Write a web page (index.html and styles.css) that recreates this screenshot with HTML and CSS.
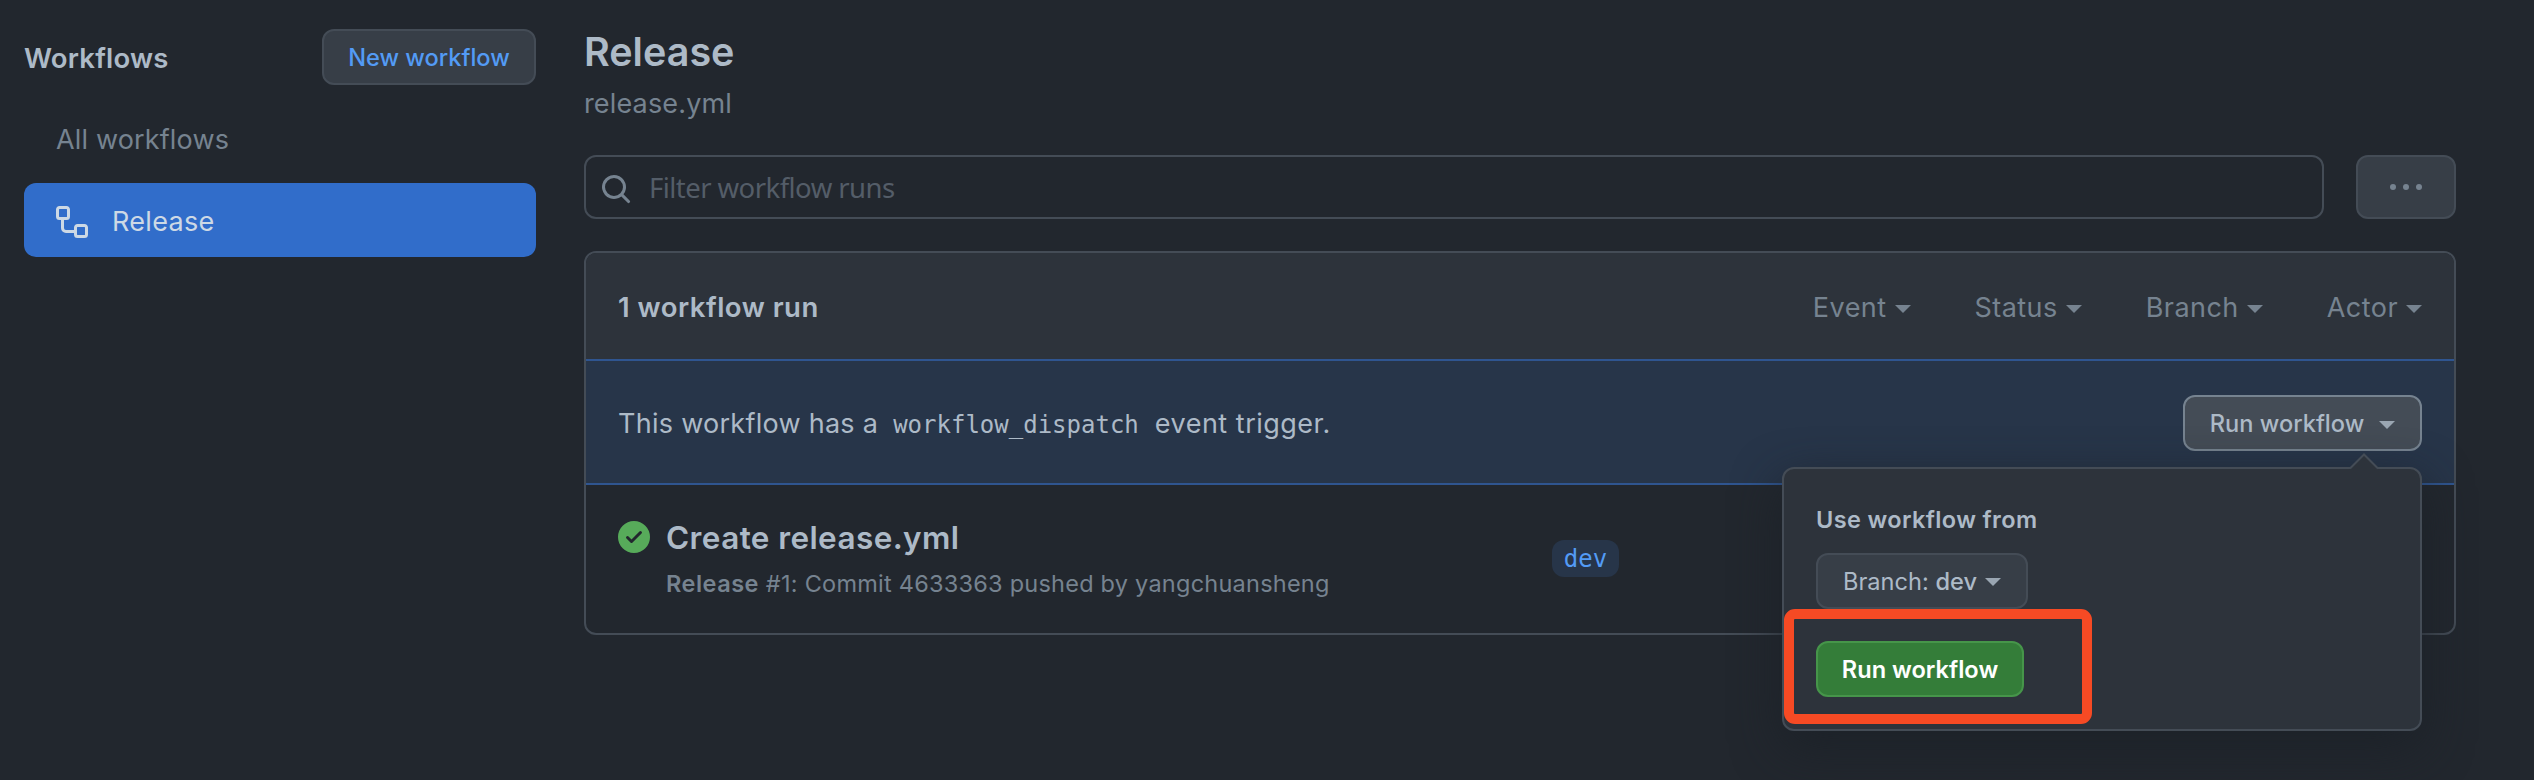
FILE: index.html
```html
<!DOCTYPE html>
<html lang="en">
<head>
<meta charset="utf-8">
<title>Workflow runs</title>
<link rel="stylesheet" href="styles.css">
</head>
<body>
<div class="page">
  <aside class="sidebar">
    <div class="sidebar-head">
      <h2 class="sidebar-title">Workflows</h2>
      <button class="btn btn-new">New workflow</button>
    </div>
    <nav class="nav">
      <a class="nav-item">All workflows</a>
      <a class="nav-item nav-active">
        <svg class="nav-icon" viewBox="0 0 16 16" width="32" height="32"><path fill-rule="evenodd" d="M0 1.75C0 .784.784 0 1.75 0h3.5C6.216 0 7 .784 7 1.75v3.5A1.75 1.75 0 015.25 7H4v4a1 1 0 001 1h4v-1.25C9 9.784 9.784 9 10.75 9h3.5c.966 0 1.75.784 1.75 1.75v3.5A1.75 1.75 0 0114.25 16h-3.5A1.75 1.75 0 019 14.25v-.75H5A2.5 2.5 0 012.5 11V7h-.75A1.75 1.75 0 010 5.25v-3.5zm1.75-.25a.25.25 0 00-.25.25v3.5c0 .138.112.25.25.25h3.5a.25.25 0 00.25-.25v-3.5a.25.25 0 00-.25-.25h-3.5zm9 9a.25.25 0 00-.25.25v3.5c0 .138.112.25.25.25h3.5a.25.25 0 00.25-.25v-3.5a.25.25 0 00-.25-.25h-3.5z"/></svg>
        <span>Release</span>
      </a>
    </nav>
  </aside>
  <main class="main">
    <h1 class="title">Release</h1>
    <div class="file">release.yml</div>
    <div class="filter-row">
      <div class="search">
        <svg class="search-icon" viewBox="0 0 16 16" width="32" height="32"><path fill-rule="evenodd" d="M11.5 7a4.499 4.499 0 11-8.998 0A4.499 4.499 0 0111.5 7zm-.82 4.74a6 6 0 111.06-1.06l3.04 3.04a.75.75 0 11-1.06 1.06l-3.04-3.04z"/></svg>
        <span class="placeholder">Filter workflow runs</span>
      </div>
      <button class="btn btn-more" aria-label="More"><i class="dot"></i><i class="dot"></i><i class="dot"></i></button>
    </div>
    <section class="box">
      <header class="box-head">
        <strong class="count">1 workflow run</strong>
        <div class="filters">
          <span class="filter">Event<i class="caret"></i></span>
          <span class="filter">Status<i class="caret"></i></span>
          <span class="filter">Branch<i class="caret"></i></span>
          <span class="filter">Actor<i class="caret"></i></span>
        </div>
      </header>
      <div class="dispatch">
        <p class="dispatch-text"><span>This workflow has a</span><code class="code">workflow_dispatch</code><span class="dispatch-tail">event trigger.</span></p>
        <div class="menu">
          <button class="btn btn-run">Run workflow<i class="caret"></i></button>
          <div class="popover">
            <svg class="pointer" width="30" height="17" viewBox="0 0 30 17"><path class="pointer-fill" d="M0 17L15 1L30 17Z"/><path class="pointer-line" d="M1 15.5L15 1.5L29 15.5"/></svg>
            <div class="popover-label">Use workflow from</div>
            <button class="btn btn-branch"><span>Branch: <b>dev</b></span><i class="caret"></i></button>
            <button class="btn btn-primary">Run workflow</button>
            <div class="highlight"></div>
          </div>
        </div>
      </div>
      <div class="run">
        <svg class="check" viewBox="0 0 16 16" width="32" height="32"><path fill-rule="evenodd" d="M8 16A8 8 0 108 0a8 8 0 000 16zm3.78-9.72a.75.75 0 00-1.06-1.06L6.75 9.19 5.28 7.72a.75.75 0 00-1.06 1.06l2 2a.75.75 0 001.06 0l4.5-4.5z"/></svg>
        <div class="run-text">
          <div class="run-title">Create release.yml</div>
          <div class="run-meta"><b>Release</b> #1: Commit 4633363 pushed by yangchuansheng</div>
        </div>
        <span class="branch">dev</span>
      </div>
    </section>
  </main>
</div>
</body>
</html>
```

FILE: styles.css
```css
* { box-sizing: border-box; }
body {
  margin: 0;
  background: #22272e;
  color: #adbac7;
  font-family: Inter, "Liberation Sans", sans-serif;
  font-size: 27px;
  line-height: 42px;
}
h1, h2, p { margin: 0; font-weight: 600; }
.page { display: flex; gap: 48px; height: 780px; padding: 0 78px 0 24px; overflow: hidden; }
.sidebar { width: 512px; flex: none; padding-top: 29px; }
.sidebar-head { display: flex; justify-content: space-between; align-items: center; height: 56px; }
.sidebar-title { font-size: 27.5px; letter-spacing: .2px; padding-top: 1px; }
.btn {
  display: flex; align-items: center; justify-content: center;
  height: 56px; padding: 1px 25px 0;
  border: 2px solid #444c56; border-radius: 12px;
  background: #373e47; color: #adbac7;
  font-family: inherit; font-size: 23.6px; font-weight: 500; line-height: 40px;
  white-space: nowrap;
}
.btn-new { width: 214px; color: #539bf5; }
.nav { display: flex; flex-direction: column; gap: 8px; padding-top: 16px; }
.nav-item { display: flex; align-items: center; height: 74px; padding: 3px 32px 0; border-radius: 12px; color: #768390; letter-spacing: .15px; }
.nav-active { background: #316dca; color: #cdd9e5; gap: 24px; letter-spacing: .3px; }
.nav-icon { fill: #cdd9e5; }
.main { flex: 1; min-width: 0; padding-top: 26px; }
.title { font-size: 39.5px; line-height: 52px; }
.file { color: #768390; line-height: 42px; padding-top: 5px; height: 77px; letter-spacing: .15px; }
.filter-row { display: flex; gap: 32px; }
.search { flex: 1; display: flex; align-items: center; height: 64px; border: 2px solid #444c56; border-radius: 12px; padding-left: 14px; }
.search-icon { fill: #768390; margin-top: 4px; }
.placeholder { font-family: "Noto Sans", sans-serif; font-size: 27.5px; letter-spacing: -.55px; color: #545d68; padding: 1px 0 0 17px; }
.btn-more { width: 100px; height: 64px; gap: 7px; padding-top: 0; }
.dot { width: 6px; height: 6px; border-radius: 50%; background: #768390; }
.box { margin-top: 32px; height: 384px; border: 2px solid #444c56; border-radius: 12px; }
.box-head { display: flex; justify-content: space-between; align-items: center; height: 106px; padding: 3px 32px 0; background: #2d333b; border-radius: 10px 10px 0 0; }
.count { font-size: 27.5px; font-weight: 600; letter-spacing: .5px; padding-bottom: 2px; }
.filters { display: flex; gap: 64px; color: #768390; letter-spacing: .45px; }
.filter { display: flex; align-items: center; gap: 8px; }
.caret { flex: none; width: 0; height: 0; border: 8px solid transparent; border-top-color: currentColor; border-bottom: 0; }
.filter .caret { margin-top: 3px; }
.dispatch { display: flex; justify-content: space-between; align-items: center; height: 126px; padding: 2px 32px 0; border: solid #2f5590; border-width: 2px 0; background: #273549; }
.dispatch-text { display: flex; align-items: center; padding-top: 1px; font-weight: 400; letter-spacing: .27px; }
.dispatch-tail { letter-spacing: .5px; }
.code { font-family: "DejaVu Sans Mono", monospace; font-size: 24px; letter-spacing: 0; padding: 2px 16px 0 15px; }
.menu { position: relative; }
.btn-run { width: 239px; gap: 15px; background: #444c56; border-color: #768390; }
.btn-run .caret { margin-top: 3px; }
.btn .caret { color: #9aa6b2; border-top-color: currentColor; }
.popover {
  position: absolute; right: 0; top: 72px; z-index: 2;
  display: flex; flex-direction: column; align-items: flex-start;
  width: 640px; height: 264px; padding: 30px 32px;
  background: #2d333b; border: 2px solid #444c56; border-radius: 12px;
  box-shadow: 0 16px 48px rgba(28, 33, 40, .9);
}
.pointer { position: absolute; right: 41px; top: -16px; }
.pointer-fill { fill: #2d333b; }
.pointer-line { fill: none; stroke: #444c56; stroke-width: 2; }
.popover-label { font-size: 23.5px; font-weight: 600; line-height: 40px; height: 54px; padding-top: 1px; letter-spacing: .38px; }
.btn-branch { width: 212px; gap: 8px; font-weight: 400; }
.btn-branch b { font-weight: 500; }
.btn-primary { width: 208px; margin-top: 32px; background: #347d39; border-color: #46954a; color: #fff; font-weight: 600; }
.highlight { position: absolute; left: 0; top: 140px; width: 308px; height: 115px; border: 10px solid #f64a24; border-radius: 11px; }
.run { display: flex; align-items: flex-start; padding: 0 32px; height: 148px; }
.check { fill: #57ab5a; margin-top: 36px; flex: none; }
.run-text { flex: none; width: 902px; padding: 31px 0 0 16px; }
.run-title { font-size: 31.5px; font-weight: 600; line-height: 44px; letter-spacing: .4px; }
.run-meta { font-size: 23.5px; line-height: 44px; padding-top: 2px; color: #768390; letter-spacing: .24px; }
.run-meta b { font-weight: 600; letter-spacing: .5px; }
.branch { flex: none; margin-top: 55px; height: 37px; width: 67px; text-align: center; border-radius: 12px; background: #273549; color: #539bf5; font: 24px/38px "DejaVu Sans Mono", monospace; }
```
